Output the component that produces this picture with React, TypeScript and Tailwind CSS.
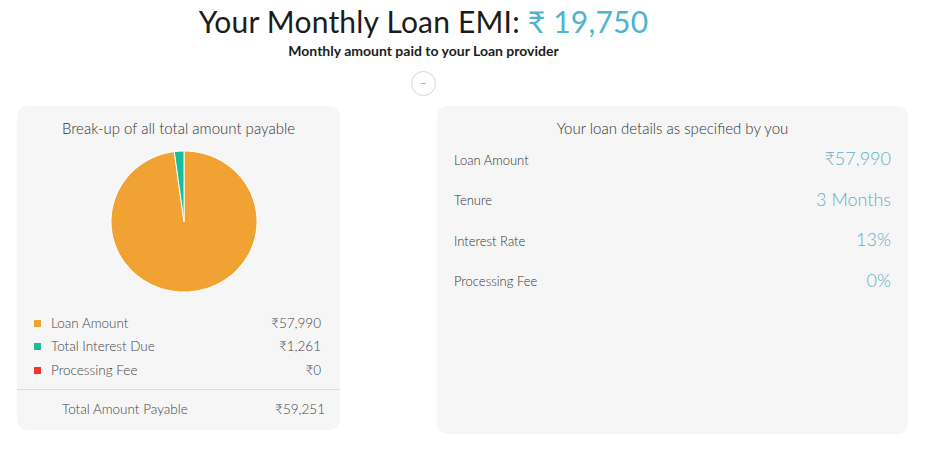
const breakup = [
  { label: "Loan Amount", value: "₹57,990", amount: 57990, color: "#f0a332", swatch: "bg-[#f0a332]" },
  { label: "Total Interest Due", value: "₹1,261", amount: 1261, color: "#1abc9c", swatch: "bg-[#1abc9c]" },
  { label: "Processing Fee", value: "₹0", amount: 0, color: "#ee3333", swatch: "bg-[#ee3333]" },
];

const details = [
  { label: "Loan Amount", value: "₹57,990" },
  { label: "Tenure", value: "3 Months" },
  { label: "Interest Rate", value: "13%" },
  { label: "Processing Fee", value: "0%" },
];

function Pie() {
  const total = breakup.reduce((s, b) => s + b.amount, 0);
  const r = 74;
  const c = 75;
  let start = 0;
  const slices = breakup
    .filter((b) => b.amount > 0)
    .map((b) => {
      const a0 = (start / total) * Math.PI * 2;
      start += b.amount;
      const a1 = (start / total) * Math.PI * 2;
      const x0 = c + r * Math.sin(a0);
      const y0 = c - r * Math.cos(a0);
      const x1 = c + r * Math.sin(a1);
      const y1 = c - r * Math.cos(a1);
      const large = a1 - a0 > Math.PI ? 1 : 0;
      const d = `M${c},${c} L${x0},${y0} A${r},${r} 0 ${large} 1 ${x1},${y1} Z`;
      return <path key={b.label} d={d} fill={b.color} stroke="#ffffff" strokeWidth="1" strokeLinejoin="round" />;
    });
  return (
    <svg width="148" height="143" viewBox="0 0 150 150" preserveAspectRatio="none">
      {slices}
    </svg>
  );
}

export default function App() {
  return (
    <div className="h-[452px] w-[935px] bg-white font-['Lato',sans-serif] text-[#333]">
      <div className="flex flex-col items-center pr-[88px]">
        <h1 className="mt-[1px] text-[30px] leading-[40px] text-[#1c1c1c] tracking-[0.2px]">
          Your Monthly Loan EMI: <span className="text-[#4cb5cd]">₹ 19,750</span>
        </h1>
        <p className="mt-[1px] text-[14px] font-bold leading-[18px] text-[#1c1c1c]">
          Monthly amount paid to your Loan provider
        </p>
        <div className="mt-[11px] flex h-[25px] w-[25px] items-center justify-center rounded-full border border-[#d8d8d8]">
          <span className="h-px w-[5px] bg-[#bbb]" />
        </div>
      </div>

      <div className="mt-[10px] flex items-start pl-[17px]">
        <div className="w-[323px] rounded-[10px] bg-[#f6f6f6] pt-[11px] pb-[11px]">
          <p className="text-center text-[15px] font-light leading-[22px] text-[#333]">
            Break-up of all total amount payable
          </p>
          <div className="mt-[11px] flex justify-center pl-[11px]">
            <Pie />
          </div>
          <div className="mt-[21px] flex flex-col gap-[5.5px] pl-[17px] pr-[19px]">
            {breakup.map((b) => (
              <div key={b.label} className="flex h-[18px] items-center text-[13.5px] font-light">
                <span className={`mr-[10px] h-[7px] w-[7px] ${b.swatch}`} />
                <span className="flex-1 text-[#444]">{b.label}</span>
                <span className="text-[#444]">{b.value}</span>
              </div>
            ))}
          </div>
          <div className="mt-[10px] border-t border-[#dcdcdc] pt-[9px] pl-[45px] pr-[15px]">
            <div className="flex h-[20px] items-center text-[13.5px] font-light text-[#444]">
              <span className="flex-1">Total Amount Payable</span>
              <span>₹59,251</span>
            </div>
          </div>
        </div>

        <div className="ml-[97px] h-[328px] w-[471px] rounded-[10px] bg-[#f6f6f6] pt-[11px] pl-[17px] pr-[17px]">
          <p className="text-center text-[15px] font-light leading-[22px] text-[#333]">
            Your loan details as specified by you
          </p>
          <div className="mt-[7px] flex flex-col gap-[15.5px]">
            {details.map((d) => (
              <div key={d.label} className="flex h-[25px] items-center justify-between">
                <span className="pt-[4px] text-[13px] font-light text-[#333]">{d.label}</span>
                <span className="text-[18px] font-light text-[#5fb0c6]">{d.value}</span>
              </div>
            ))}
          </div>
        </div>
      </div>
    </div>
  );
}
